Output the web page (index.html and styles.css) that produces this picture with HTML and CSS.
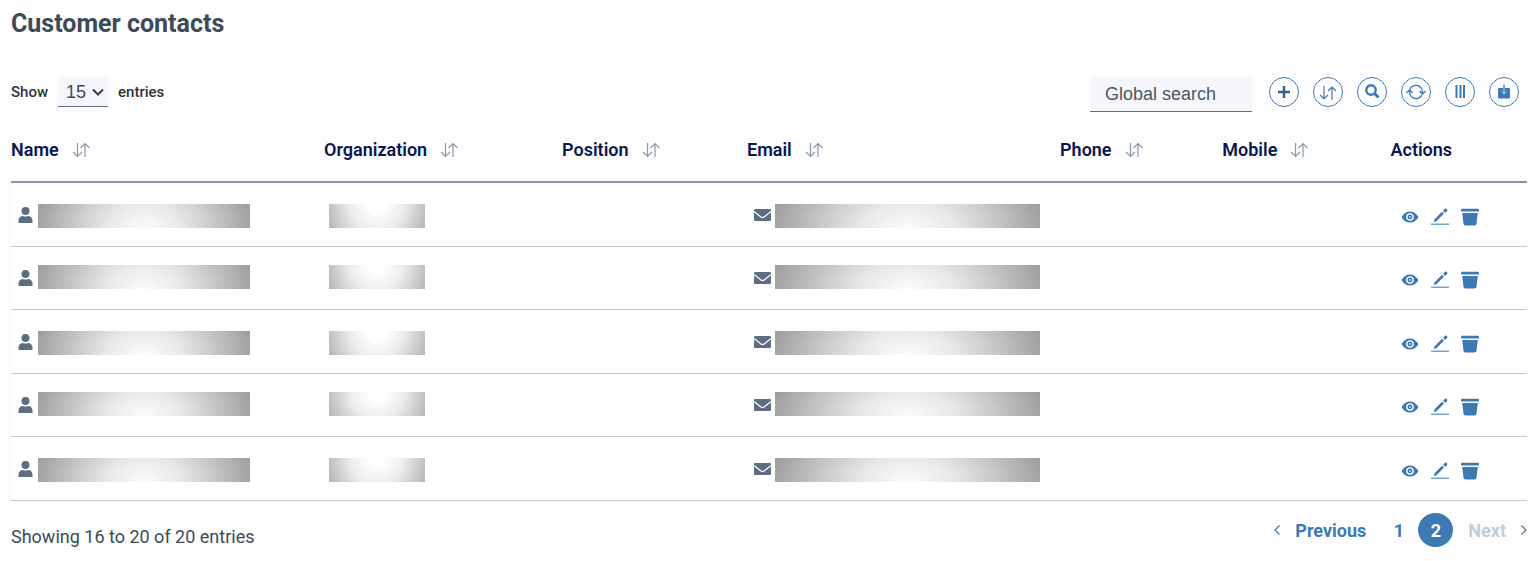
FILE: index.html
```
<!DOCTYPE html>
<html lang="en">
<head>
<meta charset="utf-8">
<title>Customer contacts</title>
<link rel="stylesheet" href="styles.css">
</head>
<body>
<svg class="sprite" aria-hidden="true">
  <symbol id="sort" viewBox="0 0 18 16"><path d="M5.500 1v13.500M1 10l4.500 4.500L10 10M13 15V1.500M8.500 6L13 1.500 17.500 6" fill="none" stroke="currentColor" stroke-width="1.200"/></symbol>
  <symbol id="user" viewBox="0 0 16 16"><circle cx="7.500" cy="4" r="4"/><path d="M.5 16v-2.500C.5 11 2.500 9 5 9c1.600.7 3.400.7 5 0C12.500 9 14.500 11 14.500 13.500V16z"/></symbol>
  <symbol id="mail" viewBox="0 0 17 12"><path d="M0 1.800V1q0-1 1-1h15q1 0 1 1v.8L9.700 7.600q-1.200.8-2.400 0zM0 3.300l6.600 5.200q1.900 1.300 3.800 0L17 3.300V11q0 1-1 1H1q-1 0-1-1z"/></symbol>
  <symbol id="eye" viewBox="0 0 20 14"><path fill-rule="evenodd" d="M.5 7C3 3 6 .8 10 .8S17 3 19.500 7C17 11 14 13.200 10 13.200S3 11 .5 7zM10 2.800a4.200 4.200 0 1 0 0 8.400 4.200 4.200 0 0 0 0-8.400zm0 1.500a2.700 2.700 0 1 1 0 5.400 2.700 2.700 0 0 1 0-5.400z"/><circle cx="10" cy="7" r="1.200" fill="#b5cde3"/></symbol>
  <symbol id="edit" viewBox="0 0 18 18"><path d="M0 15.500h18v1.500H0z" opacity=".7"/><path d="M2.800 14l.6-2.600L11 3.800l1.900 1.900L5.400 13.200zM12 2.800l2-2q.8-.7 1.600 0l.5.500q.7.800 0 1.600l-2 2z"/></symbol>
  <symbol id="trash" viewBox="0 0 18 18"><path d="M1 .8h16q1 0 1 1v1.800H0V1.800q0-1 1-1zM1.200 5h15.600L15.500 15.800q-.2 1.700-1.800 1.700H4.300q-1.600 0-1.800-1.700z"/></symbol>
</svg>
<main class="page">
  <h1 class="title">Customer contacts</h1>
  <div class="toolbar">
    <div class="length">
      <label for="len">Show</label>
      <span class="select-wrap">
        <select id="len" class="length-select"><option>10</option><option selected>15</option><option>25</option></select>
        <svg class="caret" viewBox="0 0 12 8" aria-hidden="true"><path d="M1 1.500l5 5 5-5" fill="none" stroke="currentColor" stroke-width="2"/></svg>
      </span>
      <span>entries</span>
    </div>
    <div class="tools">
      <input class="search" type="text" placeholder="Global search" aria-label="Global search">
      <div class="buttons">
        <button class="round" type="button" aria-label="Add"><svg viewBox="0 0 18 18"><path d="M9 3v12M3 9h12" stroke="#32638f" stroke-width="2.400"/></svg></button>
        <button class="round" type="button" aria-label="Sort"><svg viewBox="0 0 18 18"><path d="M5 3v13M1 12l4 4 4-4M13 17V4M9 8l4-4 4 4" fill="none" stroke="currentColor" stroke-width="1.200"/></svg></button>
        <button class="round" type="button" aria-label="Search"><svg viewBox="0 0 18 18"><circle cx="8" cy="7" r="4.700" fill="none" stroke="currentColor" stroke-width="2.400"/><path d="M11.300 10.300l4.200 4.200" stroke="currentColor" stroke-width="3"/></svg></button>
        <button class="round" type="button" aria-label="Refresh"><svg viewBox="0 0 18 18"><path d="M2.500 9a6.500 6.500 0 0 1 12-3.500M15.500 9a6.500 6.500 0 0 1-12 3.500M14.500 5.500q1 1.500 1 4M3.500 12.500q-1-1.500-1-4M-.5 10l3-3 3 3M12.500 8l3 3 3-3" fill="none" stroke="currentColor" stroke-width="1.300"/></svg></button>
        <button class="round" type="button" aria-label="Columns"><svg viewBox="0 0 18 18"><path d="M4.500 2h2v13h-2zM8.500 2h2v13h-2zM12 2h2v13h-2z"/></svg></button>
        <button class="round" type="button" aria-label="Export"><svg viewBox="0 0 18 18"><path d="M4 5h10q1 0 1 1v8.500q0 1-1 1H4q-1 0-1-1V6q0-1 1-1zM8.300 1.500h1.400V5H8.300z"/><path d="M9 5v6M6.500 8.500L9 11l2.500-2.500" fill="none" stroke="#bcd2e7" stroke-width="1"/></svg></button>
      </div>
    </div>
  </div>

  <table class="contacts">
    <colgroup><col class="c-name"><col class="c-org"><col class="c-pos"><col class="c-email"><col class="c-phone"><col class="c-mobile"><col class="c-actions"></colgroup>
    <thead>
      <tr>
        <th><button class="sort" type="button">Name<svg><use href="#sort"/></svg></button></th>
        <th><button class="sort" type="button">Organization<svg><use href="#sort"/></svg></button></th>
        <th><button class="sort" type="button">Position<svg><use href="#sort"/></svg></button></th>
        <th><button class="sort" type="button">Email<svg><use href="#sort"/></svg></button></th>
        <th><button class="sort" type="button">Phone<svg><use href="#sort"/></svg></button></th>
        <th><button class="sort" type="button">Mobile<svg><use href="#sort"/></svg></button></th>
        <th>Actions</th>
      </tr>
    </thead>
    <tbody>
      <tr>
        <td><div class="cell person"><svg><use href="#user"/></svg><span class="mask"></span></div></td>
        <td><div class="cell org"><span class="mask light"></span></div></td>
        <td></td>
        <td><div class="cell email"><svg><use href="#mail"/></svg><span class="mask"></span></div></td>
        <td></td><td></td>
        <td><div class="actions"><button type="button" aria-label="View"><svg><use href="#eye"/></svg></button><button type="button" aria-label="Edit"><svg><use href="#edit"/></svg></button><button type="button" aria-label="Delete"><svg><use href="#trash"/></svg></button></div></td>
      </tr>
      <tr>
        <td><div class="cell person"><svg><use href="#user"/></svg><span class="mask"></span></div></td>
        <td><div class="cell org"><span class="mask light"></span></div></td>
        <td></td>
        <td><div class="cell email"><svg><use href="#mail"/></svg><span class="mask"></span></div></td>
        <td></td><td></td>
        <td><div class="actions"><button type="button" aria-label="View"><svg><use href="#eye"/></svg></button><button type="button" aria-label="Edit"><svg><use href="#edit"/></svg></button><button type="button" aria-label="Delete"><svg><use href="#trash"/></svg></button></div></td>
      </tr>
      <tr>
        <td><div class="cell person"><svg><use href="#user"/></svg><span class="mask"></span></div></td>
        <td><div class="cell org"><span class="mask light"></span></div></td>
        <td></td>
        <td><div class="cell email"><svg><use href="#mail"/></svg><span class="mask"></span></div></td>
        <td></td><td></td>
        <td><div class="actions"><button type="button" aria-label="View"><svg><use href="#eye"/></svg></button><button type="button" aria-label="Edit"><svg><use href="#edit"/></svg></button><button type="button" aria-label="Delete"><svg><use href="#trash"/></svg></button></div></td>
      </tr>
      <tr>
        <td><div class="cell person"><svg><use href="#user"/></svg><span class="mask"></span></div></td>
        <td><div class="cell org"><span class="mask light"></span></div></td>
        <td></td>
        <td><div class="cell email"><svg><use href="#mail"/></svg><span class="mask"></span></div></td>
        <td></td><td></td>
        <td><div class="actions"><button type="button" aria-label="View"><svg><use href="#eye"/></svg></button><button type="button" aria-label="Edit"><svg><use href="#edit"/></svg></button><button type="button" aria-label="Delete"><svg><use href="#trash"/></svg></button></div></td>
      </tr>
      <tr>
        <td><div class="cell person"><svg><use href="#user"/></svg><span class="mask"></span></div></td>
        <td><div class="cell org"><span class="mask light"></span></div></td>
        <td></td>
        <td><div class="cell email"><svg><use href="#mail"/></svg><span class="mask"></span></div></td>
        <td></td><td></td>
        <td><div class="actions"><button type="button" aria-label="View"><svg><use href="#eye"/></svg></button><button type="button" aria-label="Edit"><svg><use href="#edit"/></svg></button><button type="button" aria-label="Delete"><svg><use href="#trash"/></svg></button></div></td>
      </tr>
    </tbody>
  </table>

  <footer class="footer">
    <p class="info">Showing 16 to 20 of 20 entries</p>
    <nav class="pager" aria-label="Pages">
      <a class="prev" href="#prev"><svg viewBox="0 0 6 10"><path d="M5.500.5L1 5l4.500 4.500" fill="none" stroke="currentColor" stroke-width="1.200"/></svg>Previous</a>
      <a class="num" href="#1">1</a>
      <a class="num current" href="#2" aria-current="page">2</a>
      <a class="next" href="#next">Next<svg viewBox="0 0 6 10"><path d="M.5.5L5 5 .5 9.500" fill="none" stroke="#5d6b78" stroke-width="1.200"/></svg></a>
    </nav>
  </footer>
</main>
</body>
</html>
```

FILE: styles.css
```
* { box-sizing: border-box; }
body { margin: 0; background: #fdfdfd; color: #3d4b57; font-family: Roboto, "Liberation Sans", sans-serif; }
button { padding: 0; border: 0; background: none; font: inherit; color: inherit; cursor: pointer; }
a { text-decoration: none; color: inherit; }
svg { display: block; fill: currentColor; overflow: visible; }
.sprite { position: absolute; width: 0; height: 0; }

.page { padding: 8px 11px 0; }
.title { margin: 0; font-size: 25px; line-height: 32px; font-weight: 700; }

.toolbar { display: flex; justify-content: space-between; align-items: flex-start; margin-top: 37px; }
.length { display: flex; align-items: center; gap: 10px; font-size: 15px; line-height: 18px; font-weight: 500; color: #2b343c; }
.select-wrap { display: grid; align-items: center; }
.length-select { grid-area: 1 / 1; width: 50px; height: 30px; padding: 0 8px; appearance: none; border: 0; border-bottom: 1px solid #5d6f86; border-radius: 0; background: #f4f6fb; color: #3d4b57; font: 18px "Liberation Sans", sans-serif; }
.caret { grid-area: 1 / 1; justify-self: end; width: 12px; height: 8px; margin-right: 4px; color: #333b43; pointer-events: none; }

.tools { display: flex; gap: 17px; padding-right: 8px; }
.search { width: 162px; height: 35px; padding: 0 15px; border: 0; border-bottom: 1px solid #5d6f86; border-radius: 0; background: #f4f6fb; font: 18px "Liberation Sans", sans-serif; color: #3d4b57; }
.search::placeholder { color: #4b5661; opacity: 1; }
.buttons { display: flex; gap: 14px; }
.round { display: grid; place-items: center; width: 30px; height: 30px; border: 1px solid #3d7ab3; border-radius: 50%; color: #3d7ab3; }
.round svg { width: 18px; height: 18px; }

.contacts { width: 100%; margin-top: 6px; table-layout: fixed; border-collapse: separate; border-spacing: 0; }
.c-name, .c-email { width: 20.65%; }
.c-org { width: 15.7%; }
.c-pos { width: 12.2%; }
.c-phone { width: 10.7%; }
.c-mobile { width: 11.1%; }
.contacts th { height: 65px; padding: 0; border-bottom: 2px solid #8695a9; text-align: left; font-size: 18px; font-weight: 600; color: #0b1750; }
.sort { display: flex; align-items: center; gap: 13px; }
.sort svg { width: 18px; height: 16px; color: #8b9aab; }
.contacts td { height: 64px; padding: 0; border-bottom: 1px solid #c0ccd8; background: #fff; }
.contacts tr:nth-child(even) td { height: 63px; }
.cell { display: flex; align-items: center; color: #5d6e82; }
.person { gap: 4px; padding-left: 7px; }
.person svg { width: 16px; height: 16px; }
.org { padding-left: 5px; }
.email { gap: 4px; padding-left: 7px; }
.email svg { width: 17px; height: 12px; }
.mask { height: 24px; margin-top: 2px; background: radial-gradient(ellipse 53% 320% at 50% 100%, #fcfcfc 0%, #e9e9e9 32%, #d0d0d0 55%, #9c9c9c 100%); }
.contacts tr:nth-child(even) .mask { margin: 0 0 2px; }
.person .mask { width: 212px; }
.email .mask { width: 265px; }
.light { width: 96px; background: radial-gradient(ellipse 56% 230% at 50% 0%, #fff 15%, #ececec 50%, #b4b4b4 100%); }
.actions { display: flex; align-items: center; gap: 12px; padding: 4px 0 0 10px; color: #3d7ab3; }
.actions svg { width: 18px; height: 18px; }

.footer { display: flex; justify-content: space-between; align-items: flex-start; padding-top: 12px; }
.info { margin: 12px 0 0; font-size: 18px; line-height: 24px; }
.pager { display: flex; align-items: center; font-size: 18px; font-weight: 700; color: #3d7ab3; }
.pager svg { width: 6px; height: 10px; }
.prev, .next { display: flex; align-items: center; gap: 15px; }
.num { display: grid; place-items: center; width: 35px; height: 34px; border-radius: 50%; }
.prev { margin-right: 15px; }
.current { margin: 0 15px 0 2px; background: #3d7ab3; color: #fff; }
.next { color: #c1cddb; }
```
